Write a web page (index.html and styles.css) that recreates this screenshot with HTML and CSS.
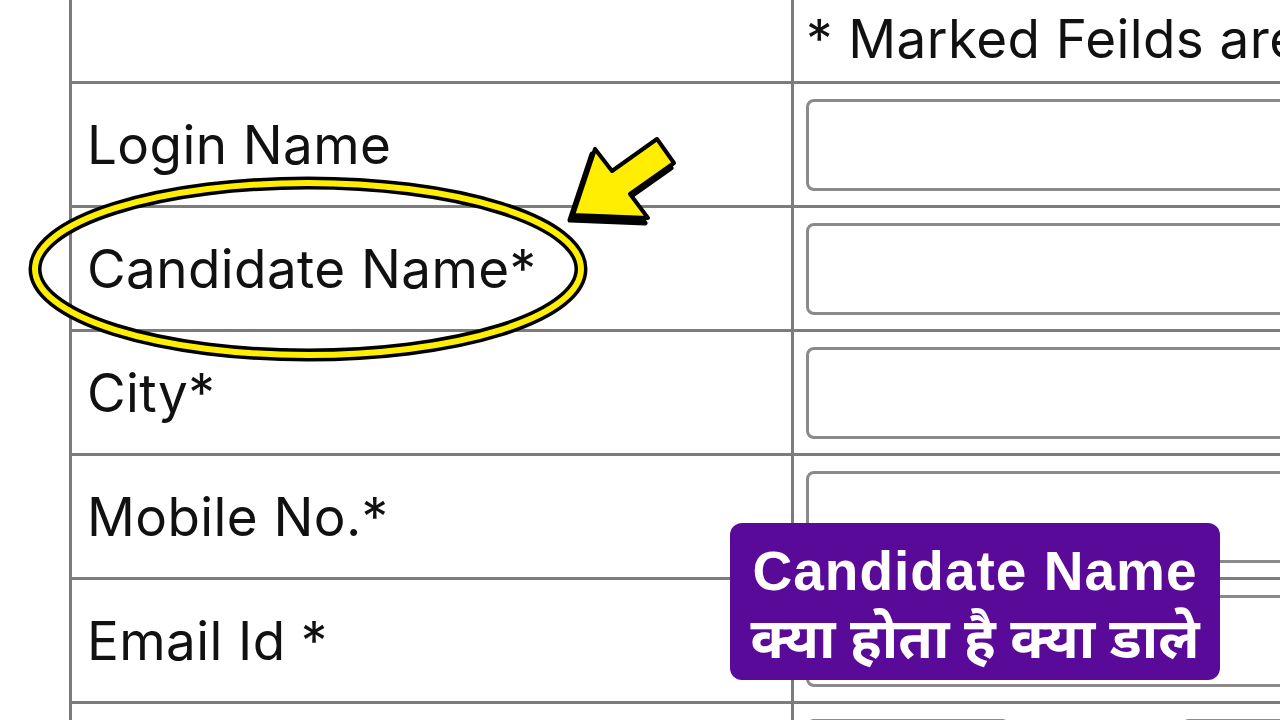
FILE: index.html
```html
<!DOCTYPE html>
<html lang="en">
  <head>
    <meta charset="UTF-8" />
    <meta name="viewport" content="width=device-width, initial-scale=1.0" />
    <title>Registration Form</title>
    <link rel="stylesheet" href="styles.css">
  </head>
  <body>
    <div class="form-table">
      <div class="cell label-cell"></div>
      <div class="cell field-cell">
        <span class="note">* Marked Feilds are mandatory</span>
      </div>

      <div class="cell label-cell">Login Name</div>
      <div class="cell field-cell"><input type="text" class="field" /></div>

      <div class="cell label-cell">Candidate Name*</div>
      <div class="cell field-cell"><input type="text" class="field" /></div>

      <div class="cell label-cell">City*</div>
      <div class="cell field-cell"><input type="text" class="field" /></div>

      <div class="cell label-cell">Mobile No.*</div>
      <div class="cell field-cell"><input type="text" class="field" /></div>

      <div class="cell label-cell">Email Id *</div>
      <div class="cell field-cell"><input type="text" class="field" /></div>

      <div class="cell label-cell"></div>
      <div class="cell field-cell split-cell">
        <input type="text" class="field small" />
        <input type="text" class="field small" />
      </div>
    </div>

    <!-- highlight marks drawn over the form -->
    <svg class="marks" width="1280" height="720" viewBox="0 0 1280 720">
      <ellipse cx="308" cy="269" rx="273" ry="86" fill="none" stroke="#000" stroke-width="13" />
      <ellipse cx="308" cy="269" rx="273" ry="86" fill="none" stroke="#ffee00" stroke-width="6" />
      <polygon points="570,220 592,154 609,176 654,144 671,168 627,199 645,223" fill="#000" stroke="#000" stroke-width="5" stroke-linejoin="round" />
      <polygon points="573,215 595,149 612,171 657,139 674,163 630,194 648,218" fill="#ffee00" stroke="#000" stroke-width="4" stroke-linejoin="round" />
    </svg>

    <div class="caption">
      <div class="caption-en">Candidate Name</div>
      <div class="caption-hi">क्या होता है क्या डाले</div>
    </div>
  </body>
</html>
```

FILE: styles.css
```css
body {
  margin: 0;
  width: 1280px;
  height: 720px;
  overflow: hidden;
  background-color: #fff;
  font-family: Inter, "Noto Sans", sans-serif;
  color: #111;
  position: relative;
}

.form-table {
  display: grid;
  grid-template-columns: 722px 620px;
  grid-template-rows: 84px;
  grid-auto-rows: 124px;
  margin-left: 69px;
  border-left: 3px solid #7c7c7c;
}

.cell {
  border-bottom: 3px solid #7c7c7c;
  display: flex;
  align-items: center;
}

.label-cell {
  border-right: 3px solid #7c7c7c;
  padding-left: 15px;
  font-size: 53px;
  letter-spacing: 0.4px;
  white-space: nowrap;
}

.field-cell {
  padding-left: 12px;
}

.note {
  font-size: 53px;
  white-space: nowrap;
  letter-spacing: 0.4px;
  margin-top: -4px;
}

.field {
  width: 560px;
  height: 92px;
  box-sizing: border-box;
  border: 3px solid #8a8a8a;
  border-radius: 8px;
  background: #fff;
  margin-top: 1px;
}

.split-cell {
  align-items: flex-start;
  gap: 171px;
  padding-top: 14px;
}

.field.small {
  width: 204px;
}

.marks {
  position: absolute;
  left: 0;
  top: 0;
}

.caption {
  position: absolute;
  left: 730px;
  top: 523px;
  width: 490px;
  height: 157px;
  box-sizing: border-box;
  padding-top: 18px;
  background-color: #5a0a98;
  border-radius: 12px;
  color: #fff;
  font-weight: bold;
  text-align: center;
}

.caption-en {
  font-family: "Liberation Sans", Arial, sans-serif;
  font-size: 55px;
  letter-spacing: 1px;
  line-height: 60px;
}

.caption-hi {
  font-family: "Noto Sans Devanagari", "Lohit Devanagari", "Noto Sans", sans-serif;
  font-size: 56px;
  line-height: 60px;
  margin-top: 14px;
}
```
